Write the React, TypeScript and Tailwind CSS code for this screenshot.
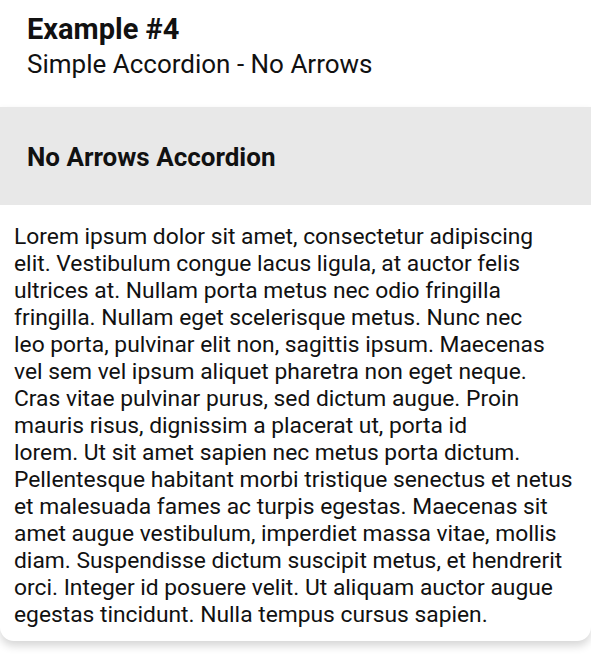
const lines = [
  "Lorem ipsum dolor sit amet, consectetur adipiscing",
  "elit. Vestibulum congue lacus ligula, at auctor felis",
  "ultrices at. Nullam porta metus nec odio fringilla",
  "fringilla. Nullam eget scelerisque metus. Nunc nec",
  "leo porta, pulvinar elit non, sagittis ipsum. Maecenas",
  "vel sem vel ipsum aliquet pharetra non eget neque.",
  "Cras vitae pulvinar purus, sed dictum augue. Proin",
  "mauris risus, dignissim a placerat ut, porta id",
  "lorem. Ut sit amet sapien nec metus porta dictum.",
  "Pellentesque habitant morbi tristique senectus et netus",
  "et malesuada fames ac turpis egestas. Maecenas sit",
  "amet augue vestibulum, imperdiet massa vitae, mollis",
  "diam. Suspendisse dictum suscipit metus, et hendrerit",
  "orci. Integer id posuere velit. Ut aliquam auctor augue",
  "egestas tincidunt. Nulla tempus cursus sapien.",
]

export default function App() {
  return (
    <div className="min-h-screen bg-white font-['Roboto',sans-serif] text-[#111]">
      <header className="px-[27px] pt-[11px] pb-[26px]">
        <h1 className="text-[29px] font-bold leading-[36px]">Example #4</h1>
        <p className="text-[26px] leading-[34px]">Simple Accordion - No Arrows</p>
      </header>

      <div className="rounded-b-[14px] bg-white shadow-[0_5px_8px_rgba(0,0,0,0.16)]">
        <button className="flex h-[98px] w-full items-center bg-[#e8e8e8] px-[27px] pt-[3px] text-left text-[26px] font-bold">
          No Arrows Accordion
        </button>
        <p className="whitespace-nowrap px-[14px] pt-[18px] pb-[13px] text-[22.8px] leading-[27px]">
          {lines.map((line, i) => (
            <span key={i} className="block">
              {line}
            </span>
          ))}
        </p>
      </div>
    </div>
  )
}
